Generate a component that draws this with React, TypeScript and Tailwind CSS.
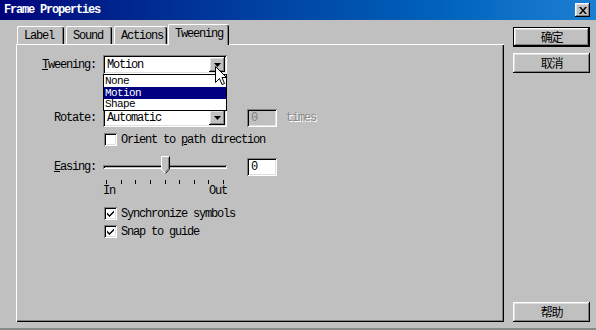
import React from 'react';

const raised =
  'shadow-[inset_-1px_-1px_#000,inset_1px_1px_#fff,inset_-2px_-2px_#808080,inset_2px_2px_#dfdfdf]';
const sunken =
  'shadow-[inset_1px_1px_#808080,inset_-1px_-1px_#fff,inset_2px_2px_#000,inset_-2px_-2px_#dfdfdf]';

const DownArrow = () => (
  <svg width="7" height="4" viewBox="0 0 7 4">
    <path d="M0 0H7L3.5 4Z" fill="#000" />
  </svg>
);

const Combo = ({ value }: { value: string }) => (
  <div className={`relative flex h-[19px] w-[124px] items-center bg-white pl-[4px] ${sunken}`}>
    <span className="leading-none">{value}</span>
    <div
      className={`absolute right-[2px] top-[2px] flex h-[15px] w-[16px] items-center justify-center bg-[#c0c0c0] ${raised}`}
    >
      <DownArrow />
    </div>
  </div>
);

const Checkbox = ({ checked, children }: { checked?: boolean; children: React.ReactNode }) => (
  <div className="flex h-[13px] items-center gap-[4px]">
    <div className={`flex h-[13px] w-[13px] items-center justify-center bg-white ${sunken}`}>
      {checked && (
        <svg width="7" height="7" viewBox="0 0 7 7">
          <path d="M0 2.5L2.5 5L7 0.5V2.5L2.5 7L0 4.5Z" fill="#000" />
        </svg>
      )}
    </div>
    <span className="leading-none">{children}</span>
  </div>
);

const Button = ({ label, primary }: { label: string; primary?: boolean }) => (
  <div
    className={`flex h-[20px] w-[77px] items-center justify-center bg-[#c0c0c0] font-['Noto_Sans_CJK_SC',sans-serif] text-[12px] ${
      primary ? 'border border-black' : ''
    } ${raised}`}
  >
    {label}
  </div>
);

const Tab = ({ label, active, className }: { label: string; active?: boolean; className: string }) => (
  <div
    className={`relative flex items-center rounded-t-[2px] border-l border-t border-white bg-[#c0c0c0] pl-[6px] shadow-[inset_-1px_0_#000,inset_-2px_0_#808080] ${
      active ? 'z-10 -mb-px h-[21px] pb-[3px]' : 'h-[18px]'
    } ${className}`}
  >
    {label}
  </div>
);

export default function App() {
  const ticks = Array.from({ length: 9 });
  return (
    <div className="flex h-[330px] w-[596px] flex-col overflow-hidden border-b-2 border-[#8a8a8a] bg-[#c0c0c0] font-['Liberation_Mono',monospace] text-[12px] tracking-[-1.2px] text-black">
      {/* title bar */}
      <div className="flex h-[20px] shrink-0 items-center justify-between bg-linear-to-r from-[#00007b] to-[#1c7fd3] pl-[4px] pr-[6px]">
        <span className="font-bold text-white">Frame Properties</span>
        <div className={`flex h-[14px] w-[15px] items-center justify-center bg-[#c0c0c0] ${raised}`}>
          <svg width="8" height="7" viewBox="0 0 8 7">
            <path d="M0 0H2L4 2.5L6 0H8L5 3.5L8 7H6L4 4.5L2 7H0L3 3.5Z" fill="#000" />
          </svg>
        </div>
      </div>

      <div className="flex">
        {/* tabs + panel */}
        <div className="ml-[16px] mt-[4px] w-[488px]">
          <div className="flex h-[20px] items-end pl-[1px]">
            <Tab label="Label" className="w-[47px]" />
            <Tab label="Sound" className="ml-[2px] w-[46px]" />
            <Tab label="Actions" className="ml-[2px] w-[53px]" />
            <Tab label="Tweening" active className="ml-px w-[61px]" />
          </div>
          <div className="h-[278px] border-l border-t border-white pt-[10px] shadow-[inset_-1px_-1px_#000,inset_-2px_-2px_#808080]">
            {/* tweening */}
            <div className="relative flex items-center">
              <span className="w-[79px] text-right">
                <span className="underline">T</span>weening:
              </span>
              <div className="relative ml-[7px]">
                <Combo value="Motion" />
                <div className="absolute left-0 top-[19px] z-20 flex h-[37px] w-[124px] flex-col border border-black bg-white text-[11px] tracking-[-0.6px]">
                  <div className="h-[12px] px-[1px] leading-[12px]">None</div>
                  <div className="h-[12px] bg-[#000080] px-[1px] leading-[12px] text-white">Motion</div>
                  <div className="h-[11px] px-[1px] leading-[11px]">Shape</div>
                </div>
                <svg
                  className="absolute left-[112px] top-[11px] z-30"
                  width="12"
                  height="20"
                  viewBox="0 0 12 20"
                >
                  <path
                    d="M0.5 0.5V16.5L4.5 12.5L7 18.5L9.5 17.5L7 11.5H11.5Z"
                    fill="#fff"
                    stroke="#000"
                    strokeWidth="1"
                  />
                </svg>
              </div>
            </div>

            {/* rotate */}
            <div className="mt-[34px] flex items-center">
              <span className="w-[79px] text-right">Rotate:</span>
              <div className="ml-[7px]">
                <Combo value="Automatic" />
              </div>
              <div className={`ml-[20px] flex h-[18px] w-[30px] items-center bg-[#c0c0c0] pl-[4px] text-[#808080] ${sunken}`}>
                0
              </div>
              <span className="ml-[9px] text-[#8a8a8a] [text-shadow:1px_1px_#fff]">times</span>
            </div>

            {/* orient */}
            <div className="mt-[6px] pl-[87px]">
              <Checkbox>
                Orient to <span className="underline">p</span>ath direction
              </Checkbox>
            </div>

            {/* easing */}
            <div className="mt-[12px] flex items-center">
              <span className="w-[79px] text-right">
                <span className="underline">E</span>asing:
              </span>
              <div className="relative ml-[7px] flex h-[18px] w-[124px] items-center">
                <div className="h-[4px] w-full border-l border-t border-[#808080] shadow-[inset_-1px_-1px_#fff,inset_1px_1px_#000]" />
                <svg className="absolute left-[58px] top-[-2px]" width="9" height="18" viewBox="0 0 9 18">
                  <path d="M0.5 0.5H8.5V13L4.5 17.5L0.5 13Z" fill="#c0c0c0" stroke="#fff" />
                  <path d="M8.5 0.5V13L4.5 17.5" fill="none" stroke="#000" />
                  <path d="M7.5 1.5V12.6L4.5 16" fill="none" stroke="#808080" />
                </svg>
              </div>
              <div className={`ml-[20px] flex h-[18px] w-[30px] items-center bg-white pl-[4px] ${sunken}`}>0</div>
            </div>

            {/* ticks */}
            <div className="ml-[89px] mt-[4px] flex w-[118px] justify-between">
              {ticks.map((_, i) => (
                <div key={i} className="h-[4px] w-px bg-black" />
              ))}
            </div>
            <div className="ml-[86px] mt-[1px] flex h-[12px] w-[124px] items-center justify-between leading-none">
              <span>In</span>
              <span>Out</span>
            </div>

            {/* checkboxes */}
            <div className="mt-[10px] pl-[87px]">
              <Checkbox checked>Synchronize symbols</Checkbox>
            </div>
            <div className="mt-[5px] pl-[87px]">
              <Checkbox checked>Snap to guide</Checkbox>
            </div>
          </div>
        </div>

        {/* buttons */}
        <div className="ml-[9px] flex h-[302px] flex-col pt-[7px]">
          <Button label="确定" primary />
          <div className="mt-[6px]">
            <Button label="取消" />
          </div>
          <div className="mt-auto">
            <Button label="帮助" />
          </div>
        </div>
      </div>
    </div>
  );
}
